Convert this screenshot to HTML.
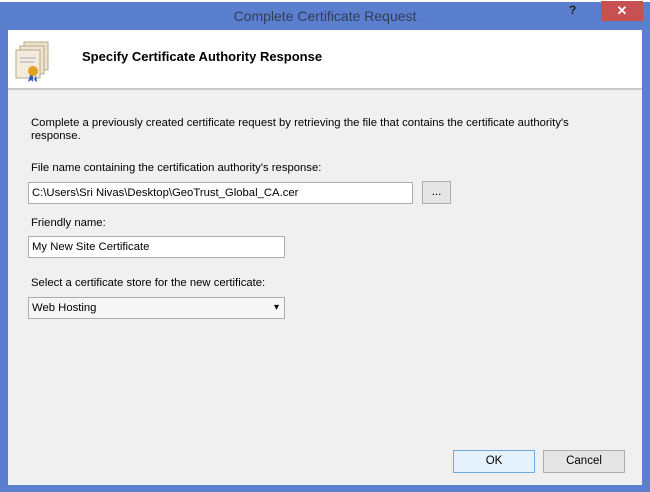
<!DOCTYPE html><html><head><style>
body{margin:0;width:650px;height:492px;background:#5b7fcf;position:relative;overflow:hidden;font-family:"Liberation Sans",sans-serif;}
.a{position:absolute}
.t{font-size:11.3px;color:#000}
.inp{position:absolute;background:#fff;border:1px solid #abadb3;box-sizing:border-box;font-size:11.3px;padding:4px 3px;height:22px;line-height:13px}
.btn{position:absolute;background:#e5e5e5;border:1px solid #acacac;box-sizing:border-box;font-size:11.5px;text-align:center;line-height:20px}
</style></head><body>
<div class="a" style="left:0;top:0;width:650px;height:2px;background:#fff"></div>
<div class="a" style="left:0;top:8px;width:650px;text-align:center;font-size:14px;color:#333c55">Complete Certificate Request</div>
<div class="a" style="left:569px;top:3px;font-size:12px;font-weight:bold;color:#222">?</div>
<div class="a" style="left:601px;top:1px;width:42px;height:20px;background:#c75050;color:#fff;text-align:center;font-size:13px;line-height:20px;font-weight:bold">✕</div>
<div class="a" style="left:8px;top:30px;width:634px;height:455px;background:#f0f0f0"></div>
<div class="a" style="left:8px;top:30px;width:634px;height:58px;background:#fff;border-bottom:2px solid #c8c8c8"></div>
<svg class="a" style="left:14px;top:40px" width="40" height="45">
<rect x="10" y="2" width="24" height="28" fill="#ece2cc" stroke="#b8a888"/>
<rect x="6" y="6" width="24" height="28" fill="#eee5d0" stroke="#b8a888"/>
<rect x="2" y="10" width="24" height="28" fill="#f3ecdc" stroke="#b8a888"/>
<line x1="6" y1="18" x2="22" y2="18" stroke="#aab"/><line x1="6" y1="22" x2="20" y2="22" stroke="#aab"/>
<circle cx="19" cy="31" r="5" fill="#e0a020"/><path d="M16 35l-2 7 3-2 2 2 0-6M22 35l1 7-3-2" fill="#3060c0"/>
</svg>
<div class="a" style="left:82px;top:49px;font-size:13px;font-weight:bold;color:#000">Specify Certificate Authority Response</div>
<div class="a t" style="left:31px;top:117px;width:570px;line-height:13px">Complete a previously created certificate request by retrieving the file that contains the certificate authority's response.</div>
<div class="a t" style="left:31px;top:162px">File name containing the certification authority's response:</div>
<div class="inp" style="left:28px;top:182px;width:385px">C:\Users\Sri Nivas\Desktop\GeoTrust_Global_CA.cer</div>
<div class="btn" style="left:422px;top:181px;width:29px;height:23px">...</div>
<div class="a t" style="left:31px;top:217px">Friendly name:</div>
<div class="inp" style="left:28px;top:236px;width:257px">My New Site Certificate</div>
<div class="a t" style="left:31px;top:277px">Select a certificate store for the new certificate:</div>
<div class="inp" style="left:28px;top:297px;width:257px;background:#f6f6f6">Web Hosting<span style="position:absolute;right:5px;top:3px;font-size:10px">&#9662;</span></div>
<div class="btn" style="left:453px;top:450px;width:82px;height:23px;border-color:#6fa9dc;background:#e5f1fb">OK</div>
<div class="btn" style="left:543px;top:450px;width:82px;height:23px">Cancel</div>
</body></html>
